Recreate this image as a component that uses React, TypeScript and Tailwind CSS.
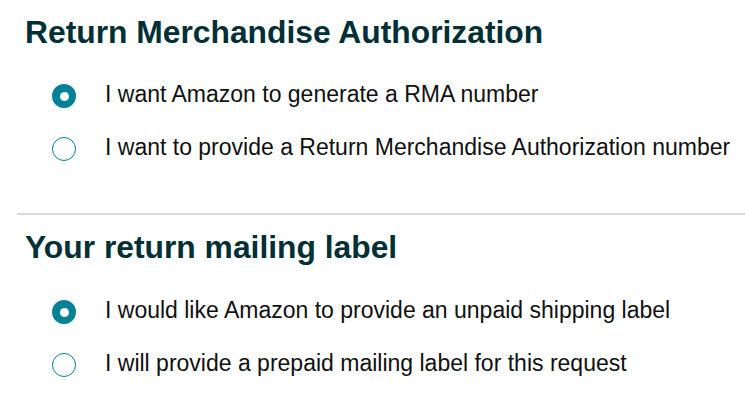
const options1 = [
  { label: "I want Amazon to generate a RMA number", checked: true },
  { label: "I want to provide a Return Merchandise Authorization number", checked: false },
];

const options2 = [
  { label: "I would like Amazon to provide an unpaid shipping label", checked: true },
  { label: "I will provide a prepaid mailing label for this request", checked: false },
];

function Radio({ checked }: { checked: boolean }) {
  return checked ? (
    <span className="flex h-[24px] w-[24px] shrink-0 items-center justify-center rounded-full bg-[#008296]">
      <span className="h-[9px] w-[9px] rounded-full bg-white" />
    </span>
  ) : (
    <span className="h-[24px] w-[24px] shrink-0 rounded-full border border-[#008296] bg-white" />
  );
}

function Section({
  title,
  options,
  listGap,
}: {
  title: string;
  options: { label: string; checked: boolean }[];
  listGap: string;
}) {
  return (
    <div className="pl-[8px]">
      <h2 className="text-[31.8px] font-bold leading-[36px] text-[#002f36]">{title}</h2>
      <div className={`flex flex-col gap-[29px] pl-[27px] ${listGap}`}>
        {options.map((o) => (
          <div key={o.label} className="flex h-[24px] items-center gap-[29px]">
            <Radio checked={o.checked} />
            <span className="-mt-[4px] whitespace-nowrap text-[23px] leading-[24px] text-[#0f1111]">{o.label}</span>
          </div>
        ))}
      </div>
    </div>
  );
}

export default function App() {
  return (
    <div className="h-[406px] w-[745px] overflow-hidden bg-white pl-[17px] pt-[14px] font-['Liberation_Sans',Arial,sans-serif]">
      <Section title="Return Merchandise Authorization" options={options1} listGap="mt-[34px]" />
      <div className="mt-[52px] h-[2px] bg-[#d5d9d9]" />
      <div className="pt-[14px]">
        <Section title="Your return mailing label" options={options2} listGap="mt-[35px]" />
      </div>
    </div>
  );
}
